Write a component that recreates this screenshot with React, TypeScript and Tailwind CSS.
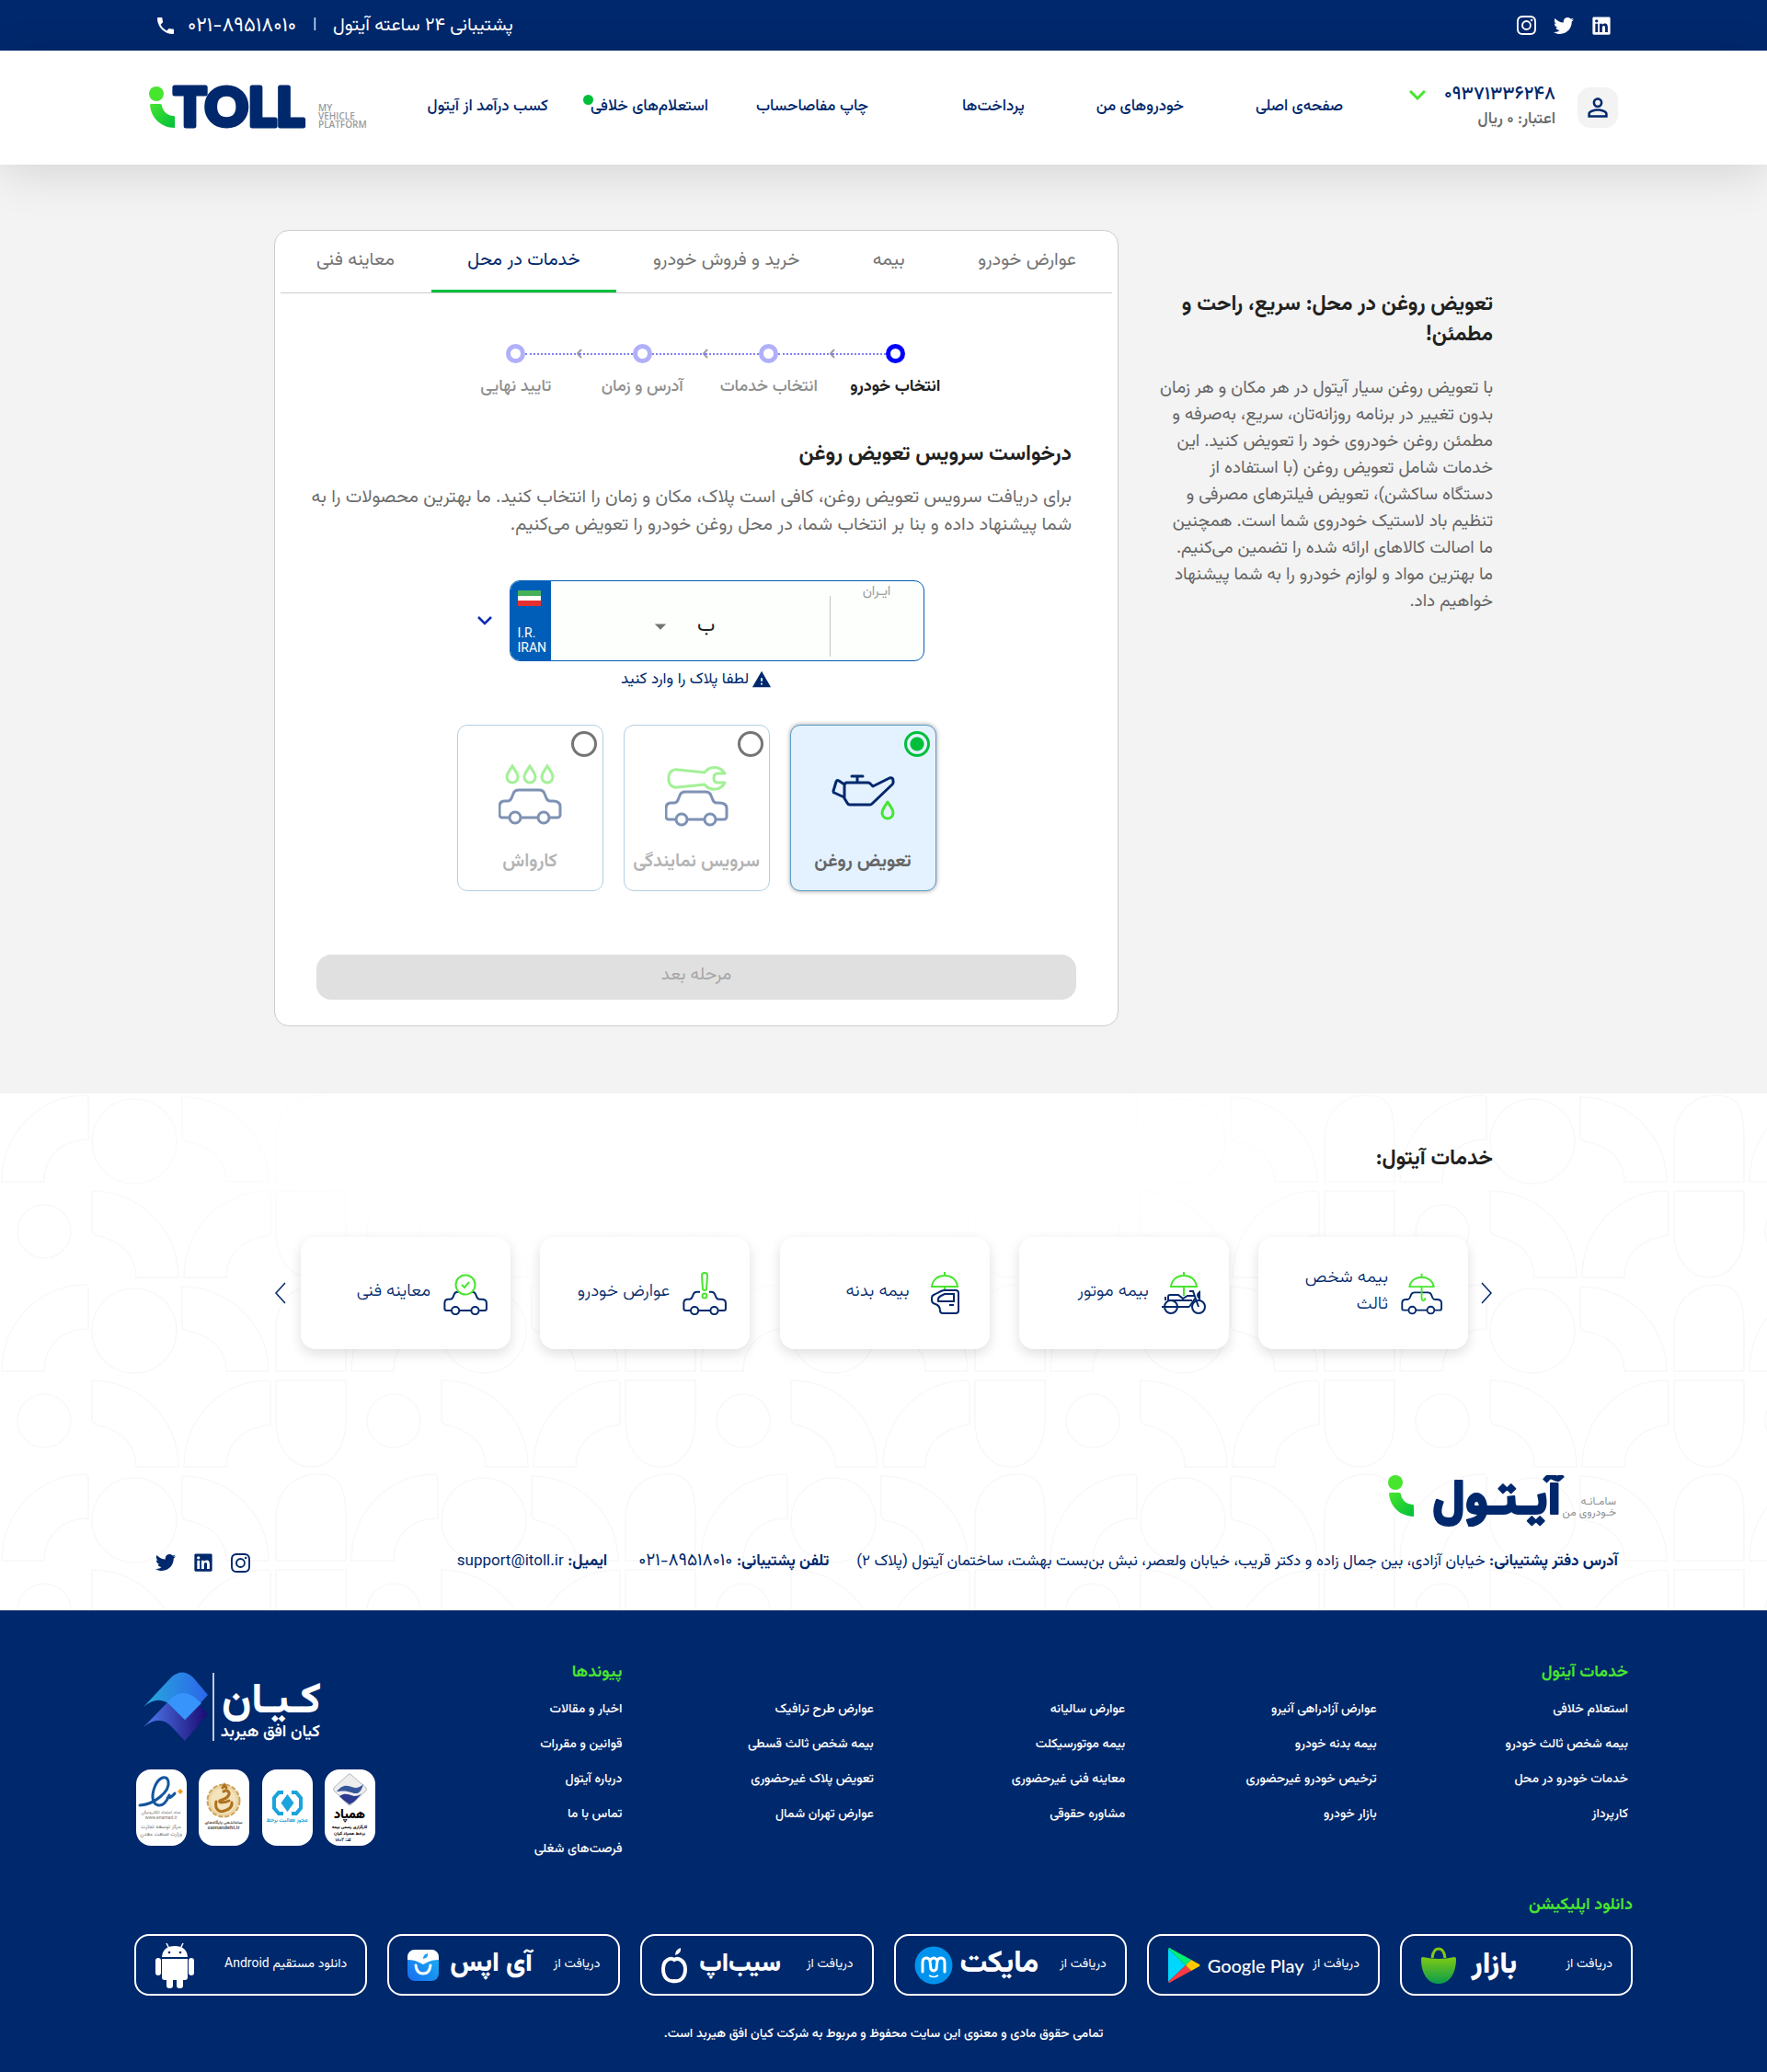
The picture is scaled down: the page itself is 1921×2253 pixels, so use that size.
import { useState, type ReactNode } from "react";
import { FaLinkedin, FaTwitter } from "react-icons/fa";
import { BsInstagram } from "react-icons/bs";
import { MdPersonOutline, MdPhone, MdWarning, MdArrowDropDown } from "react-icons/md";

const CAR =
  "M12 31H5a3 3 0 0 1-3-3v-9c0-4 2-6 6-6h3c2 0 3-1 4-3l2-5c1-3 3-4 6-4h22c3 0 5 1 6 4l2 5c1 2 2 3 4 3h3c5 0 8 2 8 6v9a3 3 0 0 1-3 3h-8M26 31h18";

function Car() {
  return (
    <>
      <path d={CAR} />
      <circle cx="19" cy="31" r="6" />
      <circle cx="50" cy="31" r="6" />
    </>
  );
}

function Drop({ x, y }: { x: number; y: number }) {
  return <path transform={`translate(${x} ${y})`} d="M7 1C4 6 1 9 1 13a6 6 0 0 0 12 0C13 9 10 6 7 1Z" />;
}

function LogoMark({ id }: { id: string }) {
  return (
    <>
      <defs>
        <linearGradient id={id} x1="0" y1="0" x2="1" y2="1">
          <stop offset="0" stopColor="#48e52f" />
          <stop offset="1" stopColor="#00bf3b" />
        </linearGradient>
      </defs>
      <circle cx="8" cy="8" r="8" fill="#48e52f" />
      <path d="M3 19H12Q14 19 14 21C15 27 20 32 27 32Q28 32 28 34V45C13 45 2 34 1 20Q1 19 3 19Z" fill={`url(#${id})`} />
    </>
  );
}

function ItollLogo() {
  return (
    <svg viewBox="0 0 240 47" className="h-[47px] w-[240px] overflow-visible" role="img" aria-label="iTOLL" direction="ltr">
      <text x="27" y="43" fontFamily="Lato, sans-serif" fontWeight="900" fontSize="58" fill="#00286c" stroke="#00286c" strokeWidth="5" strokeLinejoin="round">
        TOLL
      </text>
      <LogoMark id="markEn" />
      <g fontFamily="'Open Sans', sans-serif" fontWeight="600" fontSize="10" fill="#9a9a9a">
        <text x="184" y="27">MY</text>
        <text x="184" y="36">VEHICLE</text>
        <text x="184" y="45">PLATFORM</text>
      </g>
    </svg>
  );
}

function AitollLogo() {
  return (
    <svg viewBox="0 0 250 56" className="h-[56px] w-[250px]" role="img" aria-label="آیتول">
      <LogoMark id="markFa" />
      <g fontFamily="Vazirmatn, 'DejaVu Sans', sans-serif" direction="rtl">
        <text x="188" y="42" fontWeight="900" fontSize="53" fill="#00286c" stroke="#00286c" strokeWidth="2" strokeLinejoin="round">
          آیـتـول
        </text>
        <text x="248" y="32" fontSize="12" fill="#8f8f8f" textAnchor="start">سامـانـه</text>
        <text x="248" y="44" fontSize="12" fill="#8f8f8f">خـودروی من</text>
      </g>
    </svg>
  );
}

function Pattern() {
  return (
    <svg className="pointer-events-none absolute inset-0 size-full" aria-hidden="true">
      <defs>
        <pattern id="tiles" width="380" height="206" patternUnits="userSpaceOnUse">
          <g fill="none" stroke="#f8f8f8" strokeWidth="1.5">
            <path d="M2 96C2 42 44 2 92 2Q96 2 96 6V50C66 50 48 70 48 96Z" />
            <circle cx="146" cy="52" r="46" />
            <path d="M198 4C250 4 292 46 292 96H246C246 70 226 56 202 52Q198 50 198 46Z" />
            <path d="M300 96V50C300 20 320 2 346 2S376 20 376 50V96Z" />
            <circle cx="48" cy="150" r="29" />
            <path d="M100 106C152 106 194 148 194 200H148C148 174 130 160 104 154Q100 152 100 148Z" />
            <path d="M200 200C200 146 242 106 290 106Q294 106 294 110V154C264 158 246 174 246 200Z" />
            <path d="M300 106H376V150C376 180 360 200 338 200S300 180 300 150Z" />
          </g>
        </pattern>
        <radialGradient id="fade" cx="0.42" cy="0.1" r="0.4">
          <stop offset="0" stopColor="#fff" />
          <stop offset="0.55" stopColor="#fff" stopOpacity="0.9" />
          <stop offset="1" stopColor="#fff" stopOpacity="0" />
        </radialGradient>
      </defs>
      <rect width="100%" height="100%" fill="url(#tiles)" />
      <rect width="100%" height="100%" fill="url(#fade)" />
    </svg>
  );
}

const nav = [
  { label: "صفحه‌ی اصلی", cls: "" },
  { label: "خودروهای من", cls: "ms-[78px]" },
  { label: "پرداخت‌ها", cls: "ms-[78px]" },
  { label: "چاپ مفاصاحساب", cls: "ms-[102px]" },
  { label: "استعلام‌های خلافی", cls: "ms-[52px]", dot: true },
  { label: "کسب درآمد از آیتول", cls: "ms-[46px]" },
];

const tabs = ["عوارض خودرو", "بیمه", "خرید و فروش خودرو", "خدمات در محل", "معاینه فنی"];
const steps = ["انتخاب خودرو", "انتخاب خدمات", "آدرس و زمان", "تایید نهایی"];

const kinds: { label: string; icon: ReactNode }[] = [
  {
    label: "تعویض روغن",
    icon: (
      <svg viewBox="0 0 72 68" className="h-[68px] w-[72px]" fill="none" stroke="#00286c" strokeWidth="3" strokeLinejoin="round" strokeLinecap="round">
        <path d="M14 23q0-3 3-3h22q2 0 3 1l3 3 18-9q4-1 4 3v2q0 1-1 2L44 43q-1 1-2 1H20q-2 0-3-2l-3-5ZM14 22l-6-4q-2-1-3 1L2 29q0 2 1 2l11 5M28 20v-7M22 13h12" />
        <g stroke="#48e52f">
          <Drop x={54} y={40} />
        </g>
      </svg>
    ),
  },
  {
    label: "سرویس نمایندگی",
    icon: (
      <svg viewBox="0 0 72 68" className="h-[68px] w-[72px]" fill="none" stroke="#00286c" strokeWidth="3">
        <path stroke="#48e52f" strokeLinejoin="round" d="M65 10A13 13 0 0 0 43 9L14 6A8 8 0 0 0 4 13v4a8 8 0 0 0 10 8l29-3a13 13 0 0 0 22-2H57q-4 0-4-5t4-5Z" />
        <g transform="translate(-1 29)">
          <Car />
        </g>
      </svg>
    ),
  },
  {
    label: "کارواش",
    icon: (
      <svg viewBox="0 0 72 68" className="h-[68px] w-[72px]" fill="none" stroke="#00286c" strokeWidth="3">
        <g stroke="#48e52f">
          <Drop x={8} y={1} />
          <Drop x={27} y={1} />
          <Drop x={46} y={1} />
        </g>
        <g transform="translate(-1 27)">
          <Car />
        </g>
      </svg>
    ),
  },
];

function SmallCar() {
  return (
    <g transform="translate(0 21) scale(.69 .68)" strokeWidth="2.9">
      <Car />
    </g>
  );
}

const umbrella = "M24 0v4M10 16C11 8 17 4 24 4s13 4 14 12Z";

const services: { label: ReactNode; key: string; icon: ReactNode }[] = [
  {
    key: "third",
    label: (
      <>
        بیمه شخص
        <br />
        ثالث
      </>
    ),
    icon: (
      <g transform="translate(0 2) scale(.94)">
        <SmallCar />
        <path stroke="#48e52f" d="M24 0v4M10 15C11 8 17 4 24 4s13 4 14 11ZM24 15v13q0 3 2 3t2-3" />
      </g>
    ),
  },
  {
    key: "motor",
    label: "بیمه موتور",
    icon: (
      <>
        <path stroke="#48e52f" d={umbrella + "M24 16v10"} />
        <circle cx="10" cy="38" r="7" />
        <circle cx="40" cy="38" r="7" />
        <path d="M0 38h30M7 31V27q0-2 2-2h9l5 4 5-3h7M7 31h26M4 27v4M30 21h4l6 17M41 22q-4 3 0 7ZM30 38l6-9" />
      </>
    ),
  },
  {
    key: "body",
    label: "بیمه بدنه",
    icon: (
      <>
        <path stroke="#48e52f" d={umbrella + "M24 16v4"} />
        <path d="M24 20H36q3 0 3 3V42q0 3-3 3H22q-3 0-3-3 0-5-5-7-4-1-4-4v-3q0-2 2-3l8-4q2-1 4-1ZM20 26l4-2h10v8H17q-1-4 3-6ZM29 36h5" />
      </>
    ),
  },
  {
    key: "toll",
    label: "عوارض خودرو",
    icon: (
      <>
        <SmallCar />
        <rect x="19" y="18" width="10" height="9" fill="#fff" stroke="none" />
        <path stroke="#48e52f" d="M21 4q0-3 3-3t3 3l-1 15q-2 2-4 0Z" />
        <circle cx="24" cy="26" r="2.5" stroke="#48e52f" />
      </>
    ),
  },
  {
    key: "inspect",
    label: "معاینه فنی",
    icon: (
      <>
        <SmallCar />
        <circle cx="24" cy="14" r="10.5" fill="#fff" stroke="#48e52f" />
        <path stroke="#48e52f" d="M20 14l3 3 5-6" />
      </>
    ),
  },
];

const footerCols = [
  { title: "خدمات آیتول", links: ["استعلام خلافی", "بیمه شخص ثالث خودرو", "خدمات خودرو در محل", "کارپرداز"] },
  { title: "", links: ["عوارض آزادراهی آنیرو", "بیمه بدنه خودرو", "ترخیص خودرو غیرحضوری", "بازار خودرو"] },
  { title: "", links: ["عوارض سالیانه", "بیمه موتورسیکلت", "معاینه فنی غیرحضوری", "مشاوره حقوقی"] },
  { title: "", links: ["عوارض طرح ترافیک", "بیمه شخص ثالث قسطی", "تعویض پلاک غیرحضوری", "عوارض تهران شمال"] },
  { title: "پیوندها", links: ["اخبار و مقالات", "قوانین و مقررات", "درباره آیتول", "تماس با ما", "فرصت‌های شغلی"] },
];

function KianLogo() {
  return (
    <svg viewBox="0 0 196 78" className="ms-[56px] h-[78px] w-[196px]" role="img" aria-label="کیان افق هیربد">
      <defs>
        <linearGradient id="kTop" x1="0" y1="0" x2="1" y2="0">
          <stop offset="0" stopColor="#27a9dc" />
          <stop offset="1" stopColor="#2b66ea" />
        </linearGradient>
        <linearGradient id="kBottom" x1="0" y1="0" x2="1" y2="0">
          <stop offset="0" stopColor="#4f7cf0" />
          <stop offset="1" stopColor="#1b0a72" />
        </linearGradient>
      </defs>
      <path d="M0 60L32 27Q42 18 53 29L70 46 45 75 30 59Q17 46 0 60Z" fill="url(#kBottom)" />
      <path d="M0 38L30 6Q42-5 54 6L70 25 45 52 30 37Q17 24 0 38Z" fill="url(#kTop)" />
      <path d="M26 33Q40 16 56 28L63 34 45 52 30 37Z" fill="#3794fb" />
      <path d="M76 1V75" stroke="#fff" strokeWidth="1.5" />
      <g fontFamily="Vazirmatn, 'DejaVu Sans', sans-serif" fill="#fff" direction="rtl">
        <text x="193" y="44" fontSize="46" fontWeight="800">کـیـان</text>
        <text x="192" y="70" fontSize="18" fontWeight="600">کیان افق هیربد</text>
      </g>
    </svg>
  );
}

function Badge({ label, children }: { label: string; children: ReactNode }) {
  return (
    <a href="#" aria-label={label} className="block h-[83px] w-[55px] rounded-2xl bg-white">
      <svg viewBox="0 0 55 83" className="size-full" fontFamily="Vazirmatn, 'DejaVu Sans', sans-serif" textAnchor="middle" direction="rtl">
        {children}
      </svg>
    </a>
  );
}

function Badges() {
  return (
    <div className="mt-7 flex justify-between pe-[2px]">
      <Badge label="همپاد">
        <path d="M27 5q1 0 2 1l16 14q1 2 0 3L29 38q-2 2-4 0L10 23q-1-1 0-3L25 6q1-1 2-1Z" fill="#ededee" stroke="#b5b8bf" />
        <path d="M13 24c8-9 12-6 20-4 4 0 7-2 9-4-4 14-9 10-17 8-5-1-9 0-12 0Z" fill="#37569a" />
        <path d="M16 29c6-4 10-2 16 0 4 0 6-1 8-3-5 7-9 10-13 12-2-1-8-6-11-9Z" fill="#2b3990" />
        <text x="27" y="53" fontSize="14" fontWeight="900">همپاد</text>
        <g fontSize="5" fontWeight="700">
          <text x="27" y="64">کارگزاری رسمی بیمه</text>
          <text x="27" y="71">برخط همپاد کیان</text>
          <text x="20" y="78">کد: ۱۸۰۲</text>
        </g>
      </Badge>
      <Badge label="مجوز فعالیت برخط">
        <g fill="none" stroke="#1aa3dd">
          <path strokeWidth="4" d="M23 25h-5l-5 6v11l5 6h5M32 25h5l5 6v11l-5 6h-5" />
        </g>
        <path d="M27.500 27l7 9.500-7 9.500-7-9.500Z" fill="#1aa3dd" />
        <text x="27" y="57" fontSize="6" fontWeight="700" fill="#2aa5dc">مجوز فعالیت برخط</text>
      </Badge>
      <Badge label="ساماندهی">
        <circle cx="27" cy="34" r="17.500" fill="#ecd6a4" stroke="#c9a25c" strokeDasharray="5 2" strokeWidth="2" />
        <circle cx="27" cy="34" r="14" fill="#f3e3bd" />
        <path d="M27 24c4-3 8 1 5 5s-8 4-9 5c-2 3 6 2 10 0M19 35c-2 9 4 12 9 10 5-1 9-5 8-9M26 20l2-3 2 3" fill="none" stroke="#b0711d" strokeWidth="3" strokeLinecap="round" />
        <text x="27" y="59" fontSize="5" fontWeight="700" fill="#555">ساماندهی پایگاه‌های</text>
        <text x="27" y="65" fontSize="6" fontWeight="700" fill="#555" direction="ltr">samandehi.ir</text>
      </Badge>
      <Badge label="نماد اعتماد الکترونیکی">
        <path d="M4 39C20 38 37 24 35 13 33 5 25 9 21 17c-4 9-5 20 3 22 6 1 10-6 12-11M34 31c3 0 5-1 8-5" fill="none" stroke="#14559f" strokeWidth="3" strokeLinecap="round" />
        <path d="M48 21l3 3-3 3-3-3Z" fill="#f59a23" />
        <g fill="#777" fontSize="5">
          <text x="27" y="48">نماد اعتماد الکترونیکی</text>
          <text x="27" y="54" direction="ltr">www.enamad.ir</text>
          <text x="27" y="64" fontSize="6">مرکز توسعه تجارت</text>
          <text x="27" y="72" fontSize="6">وزارت صنعت معدن</text>
        </g>
      </Badge>
    </div>
  );
}

function StoreButton({ text, icon, name }: { text: ReactNode; icon: ReactNode; name?: ReactNode }) {
  return (
    <a href="#" className="flex h-[67px] items-center rounded-2xl border-2 border-white px-5">
      <span className="text-[14px] whitespace-nowrap">{text}</span>
      <span className="ms-auto flex items-center gap-2">
        {name}
        {icon}
      </span>
    </a>
  );
}

function Stores() {
  return (
    <div className="grid grid-cols-6 gap-[22px]">
      <StoreButton
        text="دریافت از"
        name={<span className="pe-2 text-[32px] leading-none font-black">بازار</span>}
        icon={
          <svg viewBox="0 0 40 40" className="size-10">
            <defs>
              <linearGradient id="bag" x1="0" y1="0" x2="0" y2="1">
                <stop offset="0" stopColor="#7fcb13" />
                <stop offset="1" stopColor="#0a9b4c" />
              </linearGradient>
            </defs>
            <path d="M13 12Q14 2 20 2t7 10" fill="none" stroke="#86c80c" strokeWidth="3" />
            <path d="M3 11Q20 15 37 11q2 0 2 2C39 30 31 40 20 40S1 30 1 13q0-2 2-2Z" fill="url(#bag)" />
          </svg>
        }
      />
      <StoreButton
        text="دریافت از"
        name={<span className="font-['Lato',sans-serif] text-[20px] leading-none font-medium whitespace-nowrap" dir="ltr">Google Play</span>}
        icon={
          <svg viewBox="0 0 36 40" className="h-10 w-9">
            <path d="M1 2V38L20 20Z" fill="#00d7fe" />
            <path d="M1 2q1-2 3 0L26 14 20 20Z" fill="#00f076" />
            <path d="M1 38q1 2 3 0L26 26 20 20Z" fill="#ff3a44" />
            <path d="M26 14L35 19q1 1 0 2L26 26 20 20Z" fill="#ffc900" />
          </svg>
        }
      />
      <StoreButton
        text="دریافت از"
        name={<span className="text-[33px] leading-none font-extrabold">مایکت</span>}
        icon={
          <svg viewBox="0 0 42 42" className="size-[42px]">
            <circle cx="21" cy="21" r="20.500" fill="#0093ee" />
            <path d="M9 28V18q0-5 4-5 3 0 4 3l1 9q3 4 6 0l1-9q1-3 4-3 4 0 4 5v10M17 16q4-6 8 0" fill="none" stroke="#fff" strokeWidth="3" strokeLinecap="round" />
            <path d="M16 32q5 3 10 0" fill="none" stroke="#fff" strokeWidth="1.500" />
          </svg>
        }
      />
      <StoreButton
        text="دریافت از"
        name={<span className="pe-1 text-[27px] leading-none font-black">سیب‌اپ</span>}
        icon={
          <svg viewBox="0 0 30 40" className="h-10 w-[30px]" fill="none" stroke="#fff">
            <path d="M15 14c-4-3-12 0-12 10s6 14 12 13c7 1 12-4 12-13S19 11 15 14Z" strokeWidth="4" />
            <path d="M16 9q0-6 6-8 1 6-6 8Z" fill="#fff" stroke="none" />
          </svg>
        }
      />
      <StoreButton
        text="دریافت از"
        name={<span className="pe-1 text-[29px] leading-none font-black whitespace-nowrap">آی اپس</span>}
        icon={
          <svg viewBox="0 0 34 34" className="size-[34px]">
            <defs>
              <linearGradient id="iapps" x1="0" y1="1" x2="1" y2="0">
                <stop offset="0" stopColor="#1a6bf0" />
                <stop offset="1" stopColor="#18b7f2" />
              </linearGradient>
            </defs>
            <rect width="34" height="34" rx="8" fill="url(#iapps)" />
            <path d="M0 11V8a8 8 0 0 1 8-8h18a8 8 0 0 1 8 8v3q-8 0-13 3l-4 2-4-2Q8 11 0 11Z" fill="#fff" />
            <path d="M17 10q0-5 5-6 1 5-5 6Z" fill="#1aa0f0" />
            <path d="M9 17q1 9 8 9t8-9" fill="none" stroke="#fff" strokeWidth="3" strokeLinecap="round" />
          </svg>
        }
      />
      <StoreButton
        text="دانلود مستقیم Android"
        icon={
          <svg viewBox="0 0 44 52" className="h-[52px] w-11" fill="#fff">
            <path d="M13 2l3 6M31 2l-3 6" stroke="#fff" strokeWidth="1.500" />
            <path d="M8 17Q9 5 22 5t14 12ZM8 19h28v20q0 3-3 3H11q-3 0-3-3Z" />
            <rect x="1" y="18" width="6" height="19" rx="3" />
            <rect x="37" y="18" width="6" height="19" rx="3" />
            <rect x="13" y="36" width="7" height="15" rx="3" />
            <rect x="24" y="36" width="7" height="15" rx="3" />
            <circle cx="16" cy="12" r="1.300" fill="#00286c" />
            <circle cx="28" cy="12" r="1.300" fill="#00286c" />
          </svg>
        }
      />
    </div>
  );
}

export default function App() {
  const [kind, setKind] = useState(0);
  return (
    <div dir="rtl" className="bg-white font-['Vazirmatn','Noto_Sans_Arabic','DejaVu_Sans',sans-serif] text-[#212121]">
      <div className="bg-[#00286c] text-white">
        <div className="mx-auto flex h-[55px] max-w-[1597px] items-center justify-between">
          <div className="flex gap-[19px] ps-[7px]">
            <a href="#" aria-label="LinkedIn"><FaLinkedin size={22} /></a>
            <a href="#" aria-label="Twitter"><FaTwitter size={22} /></a>
            <a href="#" aria-label="Instagram"><BsInstagram size={21} /></a>
          </div>
          <div className="flex items-center pe-[6px] pt-px text-[20px]">
            <span>پشتیبانی ۲۴ ساعته آیتول</span>
            <span className="mx-[18px] text-base">|</span>
            <a href="tel:02189518010" className="flex items-center gap-3">
              <span dir="ltr" className="text-[22px]">۰۲۱-۸۹۵۱۸۰۱۰</span>
              <MdPhone size={24} />
            </a>
          </div>
        </div>
      </div>

      <header className="relative z-10 bg-white shadow-[0_10px_50px_rgba(0,0,0,0.12)]">
        <div className="mx-auto flex h-[124px] max-w-[1597px] items-center">
          <button aria-label="حساب کاربری" className="flex size-11 items-center justify-center rounded-[14px] bg-[#f3f3f3] text-[#00286c]">
            <MdPersonOutline size={32} />
          </button>
          <div className="ms-6 w-[153px]">
            <button className="flex items-center gap-5 text-[20px] leading-[27px] font-medium text-[#00286c]">
              ۰۹۳۷۱۳۳۶۲۴۸
              <svg viewBox="0 0 18 11" className="h-[11px] w-[18px]" fill="none" stroke="#48e52f" strokeWidth="3">
                <path d="M1 1l8 8 8-8" />
              </svg>
            </button>
            <div className="text-[17px] leading-[27px] font-semibold text-[#6b6b6b]">اعتبار: ۰ ریال</div>
          </div>
          <nav className="ms-[78px]">
            <ul className="flex text-[17px] font-medium whitespace-nowrap text-[#00286c]">
              {nav.map((n) => (
                <li key={n.label} className={n.cls}>
                  <a href="#" className="relative">
                    {n.label}
                    {n.dot && <i className="absolute top-0 -left-2 size-[11px] rounded-full bg-[#00bf3b]" />}
                  </a>
                </li>
              ))}
            </ul>
          </nav>
          <a href="#" className="ms-auto"><ItollLogo /></a>
        </div>
      </header>

      <main className="bg-[#f3f3f3] pt-[71px] pb-[73px]">
        <div className="mx-auto flex max-w-[1325px] items-start gap-[34px]">
          <aside className="w-[373px] shrink-0 pt-[65px]">
            <h1 className="text-[23px] leading-[33px] font-bold">تعویض روغن در محل: سریع، راحت و مطمئن!</h1>
            <p className="mt-[27px] pe-2 text-[19px] leading-[29px] text-[#666]">
              با تعویض روغن سیار آیتول در هر مکان و هر زمان بدون تغییر در برنامه روزانه‌تان، سریع، به‌صرفه و مطمئن روغن خودروی خود را
              تعویض کنید. این خدمات شامل تعویض روغن (با استفاده از دستگاه ساکشن)، تعویض فیلترهای مصرفی و
              <br />
              تنظیم باد لاستیک خودروی شما است. همچنین
              <br />
              ما اصالت کالاهای ارائه شده را تضمین می‌کنیم.
              <br />
              ما بهترین مواد و لوازم خودرو را به شما پیشنهاد
              <br />
              خواهیم داد.
            </p>
          </aside>

          <section className="min-w-0 flex-1 rounded-2xl border border-[#ccc] bg-white pb-7">
            <div role="tablist" className="mx-[6px] flex justify-between border-b border-[#ccc]">
              {tabs.map((t, i) => (
                <button
                  key={t}
                  role="tab"
                  aria-selected={i === 3}
                  className={
                    i === 3
                      ? "h-[67px] border-b-3 border-[#00bf3b] px-[39px] text-[20px] whitespace-nowrap text-[#00286c]"
                      : "h-[67px] border-b-3 border-transparent px-[39px] text-[20px] whitespace-nowrap text-[#757575]"
                  }
                >
                  {t}
                </button>
              ))}
            </div>

            <ol className="mx-auto mt-[55px] flex w-[570px] pe-5">
              {steps.map((s, i) => (
                <li key={s} className="flex flex-1 flex-col items-center">
                  <div className="relative flex w-full items-center">
                    <span className={i === 0 ? "flex-1" : "flex-1 border-t-2 border-dotted border-[#8080f5]"} />
                    <span className={i === 0 ? "size-[21px] rounded-full border-5 border-[#0000ff]" : "size-[21px] rounded-full border-5 border-[#b0b0fa]"} />
                    <span className={i === 3 ? "flex-1" : "flex-1 border-t-2 border-dotted border-[#8080f5]"} />
                    {i < 3 && (
                      <svg viewBox="0 0 6 11" className="absolute -left-[3px] h-[11px] w-[6px]" fill="none" stroke="#a0a0a0" strokeWidth="2">
                        <path d="M5 1L1 5.500 5 10" />
                      </svg>
                    )}
                  </div>
                  <span className={i === 0 ? "mt-[13px] text-[18px] leading-[26px] font-bold whitespace-nowrap" : "mt-[13px] text-[18px] leading-[26px] font-medium whitespace-nowrap text-[#8f8f8f]"}>{s}</span>
                </li>
              ))}
            </ol>

            <div className="mt-11 ps-[50px] pe-9">
              <h2 className="text-[23px] leading-8 font-bold">درخواست سرویس تعویض روغن</h2>
              <p className="mt-4 text-[20px] leading-[30px] whitespace-nowrap text-[#6e6e6e]">
                برای دریافت سرویس تعویض روغن، کافی است پلاک، مکان و زمان را انتخاب کنید. ما بهترین محصولات را به
                <br />
                شما پیشنهاد داده و بنا بر انتخاب شما، در محل روغن خودرو را تعویض می‌کنیم.
              </p>
            </div>

            <div className="mt-[45px] flex items-center justify-center gap-[15px] ps-[5px]" dir="ltr">
              <button aria-label="پلاک‌های ذخیره شده" className="text-[#0d2bb8]">
                <svg viewBox="0 0 24 24" className="size-6" fill="none" stroke="currentColor" strokeWidth="2.500">
                  <path d="M5 8l7 7 7-7" />
                </svg>
              </button>
              <div className="flex h-[88px] w-[451px] overflow-hidden rounded-[11px] border border-[#005fb8] bg-[#fdfffc]">
                <div className="flex w-11 flex-col justify-between bg-[#005eb8] ps-2 pt-[10px] pb-[6px] font-['Roboto',sans-serif] text-[14px] leading-4 text-white">
                  <svg viewBox="0 0 25 17" className="h-[17px] w-[25px]" aria-label="پرچم ایران">
                    <rect width="25" height="6" fill="#46b058" />
                    <rect y="6" width="25" height="5" fill="#fff" />
                    <rect y="11" width="25" height="6" fill="#e5302f" />
                  </svg>
                  <span>I.R.<br />IRAN</span>
                </div>
                <input aria-label="دو رقم اول پلاک" className="w-[104px] bg-transparent text-center outline-none" />
                <span className="flex items-center pt-3">
                  <MdArrowDropDown size={30} className="text-[#757575]" />
                  <select aria-label="حرف پلاک" defaultValue="ب" dir="rtl" className="w-[70px] appearance-none bg-transparent text-center text-[22px] leading-8 outline-none">
                    <option>ب</option>
                    <option>الف</option>
                    <option>د</option>
                  </select>
                </span>
                <input aria-label="سه رقم پلاک" className="min-w-0 flex-1 bg-transparent text-center outline-none" />
                <span className="mt-4 mb-1 w-px bg-[#c4c4c4]" />
                <label className="flex w-[101px] flex-col items-center text-[15px] leading-6 text-[#9c9c9c]">
                  ایـران
                  <input className="h-14 w-full bg-transparent text-center outline-none" />
                </label>
              </div>
            </div>
            <p className="mt-2 flex items-center justify-center gap-[3px] text-[17px] leading-6 text-[#00286c]">
              <MdWarning size={22} />
              لطفا پلاک را وارد کنید
            </p>

            <div className="mt-[37px] flex justify-center gap-[22px]">
              {kinds.map((k, i) => (
                <label
                  key={k.label}
                  className={
                    i === kind
                      ? "relative flex h-[181px] w-[159px] cursor-pointer flex-col items-center rounded-[11px] border border-[#5b9dc4] bg-[#e4f2ff] pt-[42px] shadow-[0_0_5px_rgba(0,0,0,0.4)]"
                      : "relative flex h-[181px] w-[159px] cursor-pointer flex-col items-center rounded-[11px] border border-[#b3cfe2] pt-[42px]"
                  }
                >
                  <input
                    type="radio"
                    name="kind"
                    checked={i === kind}
                    onChange={() => setKind(i)}
                    className="absolute top-[6px] right-[6px] size-7 appearance-none rounded-full border-3 border-[#757575] checked:border-[#00bf3b] checked:bg-[radial-gradient(circle,#00bf3b_0_7px,transparent_8px)]"
                  />
                  <span className={i === kind ? "pe-[3px]" : "pe-[3px] opacity-50"}>{k.icon}</span>
                  <span className={i === kind ? "mt-6 text-[20px] leading-7 font-bold text-[#666]" : "mt-6 text-[20px] leading-7 font-semibold whitespace-nowrap text-[#b3b3b3]"}>
                    {k.label}
                  </span>
                </label>
              ))}
            </div>

            <div className="mt-[69px] px-[45px]">
              <button disabled className="h-[49px] w-full rounded-2xl bg-[#e0e0e0] pb-[2px] text-[19px] text-[#a6a6a6]">مرحله بعد</button>
            </div>
          </section>
        </div>
      </main>

      <section className="relative">
        <Pattern />
        <div className="relative mx-auto max-w-[1325px] pt-[54px]">
          <h2 className="text-[23px] leading-[34px] font-bold">خدمات آیتول:</h2>
          <div className="mt-[68px] flex items-center justify-between">
            <button aria-label="قبلی">
              <svg viewBox="0 0 14 24" className="h-6 w-[14px]" fill="none" stroke="#00286c" strokeWidth="1.500"><path d="M2 1l10 11L2 23" /></svg>
            </button>
            <div className="flex flex-1 justify-between ps-[13px] pe-[15px]">
              {services.map((s) => (
                <a key={s.key} href="#" className="flex h-[122px] w-[228px] items-center gap-[13px] rounded-2xl bg-white ps-6 shadow-[0_5px_14px_rgba(0,0,0,0.13)]">
                  <svg viewBox="-1 -1 50 48" className="h-12 w-[50px]" fill="none" stroke="#00286c" strokeWidth="2">{s.icon}</svg>
                  <span className="pb-1 text-[19px] leading-[29px] font-light text-[#00286c]">{s.label}</span>
                </a>
              ))}
            </div>
            <button aria-label="بعدی">
              <svg viewBox="0 0 14 24" className="h-6 w-[14px]" fill="none" stroke="#00286c" strokeWidth="1.500"><path d="M12 1L2 12l10 11" /></svg>
            </button>
          </div>
        </div>

        <div className="relative mx-auto max-w-[1597px] pt-[137px] pb-9">
          <AitollLogo />
          <div className="mt-[23px] flex h-8 items-center justify-between whitespace-nowrap text-[#00286c]">
            <address className="flex gap-[30px] text-[17px] not-italic">
              <span><b>آدرس دفتر پشتیبانی:</b> خیابان آزادی، بین جمال زاده و دکتر قریب، خیابان ولعصر، نبش بن‌بست بهشت، ساختمان آیتول (پلاک ۲)</span>
              <span><b>تلفن پشتیبانی:</b> <span dir="ltr" className="ms-1 text-[19px] leading-none">۰۲۱-۸۹۵۱۸۰۱۰</span></span>
              <span><b>ایمیل:</b> <a href="mailto:support@itoll.ir">support@itoll.ir</a></span>
            </address>
            <div className="flex items-center gap-[19px] pe-[7px]">
              <a href="#" aria-label="Instagram"><BsInstagram size={21} /></a>
              <a href="#" aria-label="LinkedIn"><FaLinkedin size={22} /></a>
              <a href="#" aria-label="Twitter"><FaTwitter size={22} /></a>
            </div>
          </div>
        </div>
      </section>

      <footer className="bg-[#00286c] text-white">
        <div className="mx-auto max-w-[1629px] pt-[49px]">
          <div className="grid grid-cols-[repeat(5,1fr)_262px]">
            {footerCols.map((c, i) => (
              <div key={i} className="ps-[5px]">
                <h3 className="h-10 text-[18px] leading-[38px] font-bold text-[#48e52f]">{c.title}</h3>
                <ul className="text-[14px] font-medium">
                  {c.links.map((l) => (
                    <li key={l} className="h-[38px] leading-[38px]"><a href="#">{l}</a></li>
                  ))}
                </ul>
              </div>
            ))}
            <div className="pt-[18px]">
              <KianLogo />
              <Badges />
            </div>
          </div>
          <h3 className="mt-[23px] mb-3 text-[18px] leading-[38px] font-bold text-[#48e52f]">دانلود اپلیکیشن</h3>
          <Stores />
          <p className="pt-[23px] pb-[23px] text-center text-[14px] leading-[38px] font-medium">
            تمامی حقوق مادی و معنوی این سایت محفوظ و مربوط به شرکت کیان افق هیربد است.
          </p>
        </div>
      </footer>
    </div>
  );
}
